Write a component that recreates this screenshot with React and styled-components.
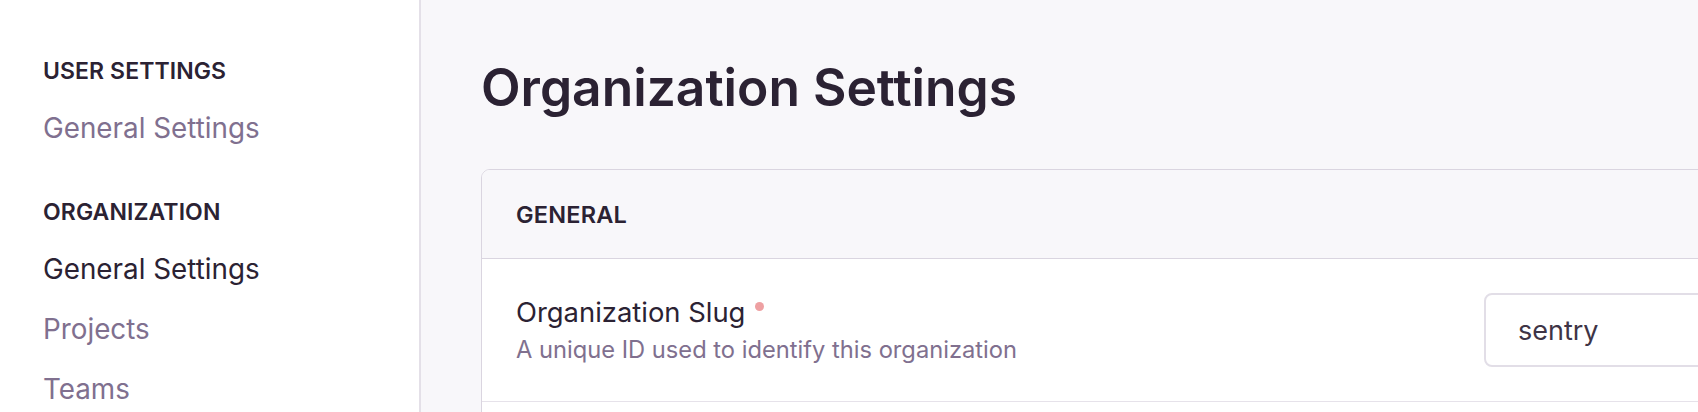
import React from 'react'
import styled, { createGlobalStyle } from 'styled-components'

const GlobalStyle = createGlobalStyle`
  html, body {
    margin: 0;
    padding: 0;
    height: 100%;
    overflow: hidden;
  }
  body {
    font-family: Inter, "Noto Sans", sans-serif;
    color: #2b2233;
    -webkit-font-smoothing: antialiased;
  }
  #root { height: 100%; }
`

const Layout = styled.div`
  display: flex;
  height: 100vh;
  width: 100%;
`

const Sidebar = styled.nav`
  flex: 0 0 421px;
  background: #fff;
  border-right: 2px solid #e4e0e8;
  padding: 59px 0 0 43px;
  box-sizing: border-box;
`

const NavSection = styled.div`
  margin-bottom: 42px;
`

const NavHeading = styled.div`
  font-size: 23px;
  line-height: 24px;
  font-weight: 600;
  letter-spacing: 0.1px;
  text-transform: uppercase;
  color: #2b2233;
  margin-bottom: 15px;
`

const NavLink = styled.a`
  display: block;
  font-size: 27.8px;
  line-height: 60px;
  color: ${(p) => (p.active ? '#2b2233' : '#80708f')};
  text-decoration: none;
  cursor: pointer;
`

const Main = styled.main`
  flex: 1;
  min-width: 0;
  overflow: hidden;
  background: #f8f7fa;
  padding: 59px 0 0 60px;
`

const Title = styled.h1`
  margin: 0 0 54px;
  font-size: 51.5px;
  line-height: 56px;
  font-weight: 600;
  color: #2b2233;
  white-space: nowrap;
`

const Panel = styled.section`
  width: 1400px;
  min-height: 420px;
  background: #fff;
  border: 1px solid #dad5e0;
  border-radius: 9px;
  overflow: hidden;
`

const PanelHeader = styled.div`
  display: flex;
  align-items: center;
  height: 88px;
  padding: 0 34px;
  background: #f8f7fa;
  border-bottom: 1px solid #dad5e0;
  font-size: 23.5px;
  font-weight: 600;
  letter-spacing: 0.2px;
  text-transform: uppercase;
  color: #2b2233;
`

const FieldRow = styled.div`
  display: grid;
  grid-template-columns: 1fr 364px;
  align-items: center;
  height: 142px;
  padding: 0 34px;
  border-bottom: 1px solid #e6e2ea;
`

const FieldLabel = styled.div`
  display: flex;
  flex-direction: column;
  gap: 8px;
`

const LabelText = styled.div`
  display: flex;
  align-items: flex-start;
  font-size: 27.4px;
  line-height: 32px;
  color: #2b2233;
`

const Required = styled.span`
  flex: none;
  width: 9px;
  height: 9px;
  margin: 6px 0 0 10px;
  border-radius: 50%;
  background: #eea0a2;
`

const HelpText = styled.div`
  font-size: 23.7px;
  line-height: 28px;
  color: #80708f;
`

const Input = styled.input`
  box-sizing: border-box;
  width: 100%;
  height: 74px;
  padding: 0 32px;
  border: 2px solid #e2dee7;
  border-radius: 8px;
  background: #fff;
  font-family: inherit;
  font-size: 27px;
  color: #3e3446;
  outline: none;
`

export default function App() {
  return (
    <Layout>
      <GlobalStyle />
      <Sidebar>
        <NavSection>
          <NavHeading>User Settings</NavHeading>
          <NavLink>General Settings</NavLink>
        </NavSection>
        <NavSection>
          <NavHeading>Organization</NavHeading>
          <NavLink active>General Settings</NavLink>
          <NavLink>Projects</NavLink>
          <NavLink>Teams</NavLink>
        </NavSection>
      </Sidebar>
      <Main>
        <Title>Organization Settings</Title>
        <Panel>
          <PanelHeader>General</PanelHeader>
          <FieldRow>
            <FieldLabel>
              <LabelText>
                Organization Slug
                <Required />
              </LabelText>
              <HelpText>A unique ID used to identify this organization</HelpText>
            </FieldLabel>
            <Input defaultValue="sentry" />
          </FieldRow>
        </Panel>
      </Main>
    </Layout>
  )
}
